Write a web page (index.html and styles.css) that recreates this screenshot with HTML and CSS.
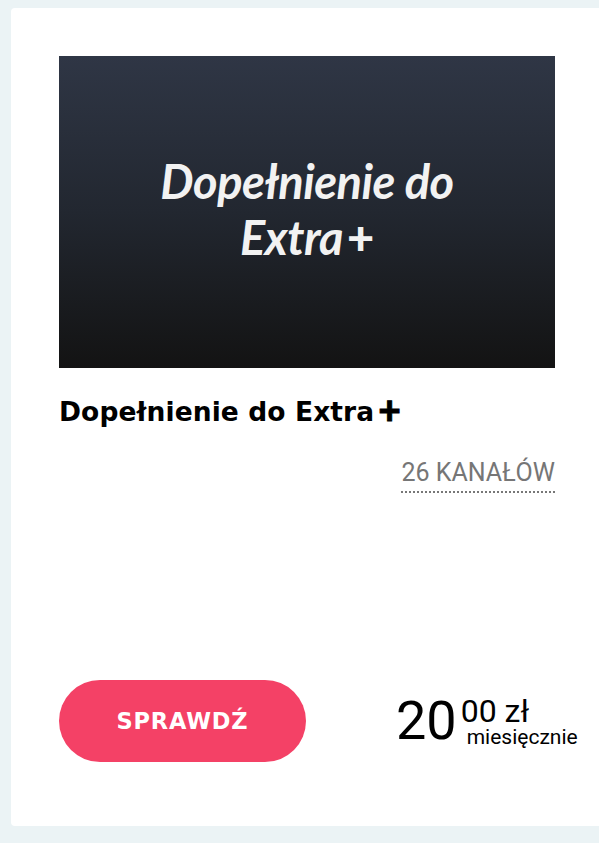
FILE: index.html
```html
<!DOCTYPE html>
<html lang="pl">
<head>
<meta charset="utf-8">
<title>Dopełnienie do Extra+</title>
<link rel="stylesheet" href="styles.css">
</head>
<body>
<div class="card">
  <div class="cover">
    <p class="cover-text">Dopełnienie do<br>Extra<span class="cover-plus">+</span></p>
  </div>
  <h2 class="title">Dopełnienie do Extra<span class="title-plus">+</span></h2>
  <div class="channels-row">
    <a class="channels">26 KANAŁÓW</a>
  </div>
  <div class="footer">
    <button class="btn">SPRAWDŹ</button>
    <div class="price">
      <span class="price-main">20</span>
      <span class="price-side">
        <span class="price-cents">00 zł</span>
        <span class="price-period">miesięcznie</span>
      </span>
    </div>
  </div>
</div>
</body>
</html>
```
FILE: styles.css
```css
html, body {
  margin: 0;
  padding: 0;
}
body {
  background: #ebf3f5;
  width: 599px;
  height: 843px;
  overflow: hidden;
}
.card {
  box-sizing: border-box;
  width: 592px;
  height: 818px;
  margin: 8px 0 0 11px;
  padding: 48px 48px 64px;
  background: #ffffff;
  border-radius: 4px;
  display: flex;
  flex-direction: column;
}
.cover {
  width: 496px;
  height: 312px;
  flex-shrink: 0;
  background: linear-gradient(180deg, #2f3645 0%, #222730 50%, #131313 100%);
  display: flex;
  align-items: center;
  justify-content: center;
}
.cover-text {
  margin: 0;
  color: #f2f2f2;
  font-family: Lato, "Noto Sans", sans-serif;
  font-style: italic;
  font-weight: 700;
  font-size: 47px;
  line-height: 56px;
  text-align: center;
  letter-spacing: -0.5px;
  padding-bottom: 6px;
}
.cover-plus {
  font-style: normal;
  font-weight: 900;
  margin-left: 4px;
}
.title {
  margin: 28px 0 0;
  font-family: "DejaVu Sans", Lato, sans-serif;
  font-weight: 700;
  font-size: 26.5px;
  line-height: 32px;
  color: #000;
  letter-spacing: 0.1px;
}
.title-plus {
  margin-left: 4px;
  font-family: Lato, "DejaVu Sans", sans-serif;
  font-weight: 900;
  font-size: 39px;
  line-height: 0;
  vertical-align: -3px;
  -webkit-text-stroke: 0.8px #000;
}
.channels-row {
  display: flex;
  justify-content: flex-end;
  margin-top: 31px;
}
.channels {
  font-family: Roboto, "Liberation Sans", sans-serif;
  font-size: 25px;
  line-height: 28px;
  color: #767676;
  padding-bottom: 4px;
  border-bottom: 2px dotted #777;
}
.footer {
  margin-top: auto;
  display: flex;
  align-items: center;
}
.btn {
  flex-shrink: 0;
  width: 247px;
  height: 82px;
  border: 0;
  border-radius: 41px;
  background: #f44166;
  color: #fff;
  font-family: "DejaVu Sans", Lato, sans-serif;
  font-weight: 700;
  font-size: 22.5px;
  letter-spacing: 0.8px;
  padding: 0;
}
.price {
  flex-shrink: 0;
  margin-left: 90px;
  display: flex;
  align-items: flex-start;
  font-family: Roboto, "Liberation Sans", sans-serif;
  color: #000;
}
.price-main {
  font-size: 54px;
  line-height: 54px;
}
.price-side {
  display: flex;
  flex-direction: column;
  margin-left: 4px;
}
.price-cents {
  font-size: 32px;
  line-height: 26px;
  margin-top: 4px;
}
.price-period {
  font-size: 21px;
  line-height: 20px;
  margin-top: 3px;
  padding-left: 6px;
}
```
